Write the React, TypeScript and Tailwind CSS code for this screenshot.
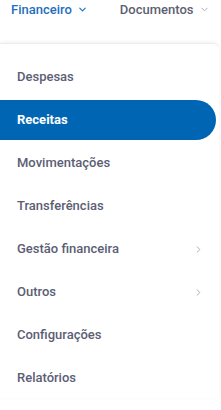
import { ChevronDown, ChevronRight } from 'lucide-react';

const ITEMS: Array<{ label: string; active?: boolean; sub?: boolean }> = [
  { label: 'Despesas' },
  { label: 'Receitas', active: true },
  { label: 'Movimentações' },
  { label: 'Transferências' },
  { label: 'Gestão financeira', sub: true },
  { label: 'Outros', sub: true },
  { label: 'Configurações' },
  { label: 'Relatórios' },
];

export default function App() {
  return (
    <div className="h-[410px] w-[221px] overflow-hidden bg-white font-['Roboto',sans-serif]">
      {/* top nav */}
      <div className="flex items-center pl-[11px] pt-[1px] h-[18px] text-[13px] font-medium">
        <span className="flex items-center text-[#1f6fbe]">
          Financeiro
          <ChevronDown className="ml-[5px] h-[11px] w-[11px]" strokeWidth={2.5} />
        </span>
        <span className="ml-[32px] flex items-center text-[#5c5f73]">
          Documentos
          <ChevronDown className="ml-[6px] h-[11px] w-[11px] text-[#a4a6b8]" strokeWidth={2} />
        </span>
      </div>

      {/* menu card */}
      <div className="mt-[25px] mr-[2px] flex flex-col gap-[3px] rounded-tr-[6px] border-t border-[#ececf0] bg-white pt-[13px] shadow-[0_-1px_4px_rgba(0,0,0,0.06)]">
        {ITEMS.map((item) => (
          <div
            key={item.label}
            className={
              item.active
                ? 'mr-[3px] flex h-[40px] items-center rounded-r-[20px] bg-[#0066b3] pl-[17px] text-[13px] font-bold text-white'
                : 'flex h-[40px] items-center justify-between pl-[17px] pr-[15px] text-[13px] font-medium text-[#5b5e74]'
            }
          >
            <span>{item.label}</span>
            {item.sub && <ChevronRight className="h-[11px] w-[11px] text-[#a4a6bc]" strokeWidth={2} />}
          </div>
        ))}
      </div>
    </div>
  );
}
